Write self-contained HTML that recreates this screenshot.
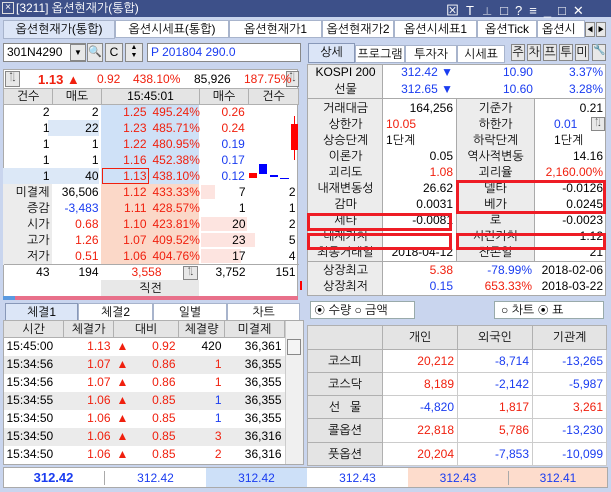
<!DOCTYPE html>
<html><head><meta charset="utf-8"><style>
*{margin:0;padding:0;box-sizing:border-box}
body{width:611px;height:492px;background:#c9d5ee;font-family:"Liberation Sans","NanumGothic","Noto Sans CJK KR",sans-serif;font-size:12px;color:#000;position:relative;overflow:hidden}
.a{position:absolute}
.r{color:#f0200e}.b{color:#1a3cf0}
table{border-collapse:collapse;position:absolute;table-layout:fixed}
td{height:16px;padding:0 3px;white-space:nowrap;overflow:hidden;line-height:15px}
.tR{text-align:right}.tC{text-align:center}
.hd{background:#e4e4e4;text-align:center;border:1px solid #b0b0b0}
.tab{position:absolute;top:20px;height:18px;background:#fff;border:1px solid #a8b4cc;text-align:center;line-height:17px;font-size:12px}
.btn{position:absolute;background:#e8e8e8;border:1px solid #888;text-align:center}
.rb{position:absolute;border:3px solid #ee1c25}
.pl{padding-left:22px}
</style></head><body>
<div class="a" style="left:0;top:0;width:611px;height:17px;background:#3d5089"></div>
<div class="a" style="left:2px;top:2px;width:12px;height:12px;border:1px solid #ddd;color:#fff;font-size:10px;line-height:10px;text-align:center">×</div>
<div class="a" style="left:16px;top:1px;color:#fff;font-size:12px">[3211] 옵션현재가(통합)</div>
<div class="a" style="left:446px;top:0;color:#fff;font-size:13px;letter-spacing:7px">⊠T⊥□?≡_□✕</div>
<div class="tab" style="left:3px;width:112px;background:#dde6f7;top:20px;height:19px">옵션현재가(통합)</div>
<div class="tab" style="left:115px;width:114px">옵션시세표(통합)</div>
<div class="tab" style="left:229px;width:93px">옵션현재가1</div>
<div class="tab" style="left:322px;width:72px">옵션현재가2</div>
<div class="tab" style="left:394px;width:83px">옵션시세표1</div>
<div class="tab" style="left:477px;width:60px">옵션Tick</div>
<div class="tab" style="left:537px;width:48px;text-align:left;padding-left:4px">옵션시</div>
<div class="btn" style="left:585px;top:22px;width:10px;height:15px;font-size:8px;line-height:13px">◀</div>
<div class="btn" style="left:596px;top:22px;width:10px;height:15px;font-size:8px;line-height:13px">▶</div>
<div class="a" style="left:3px;top:43px;width:83px;height:19px;background:#fff;border:1px solid #888;padding-left:3px;line-height:17px">301N4290</div>
<div class="btn" style="left:70px;top:44px;width:16px;height:17px;font-size:8px;line-height:15px">▼</div>
<div class="btn" style="left:87px;top:43px;width:16px;height:19px;font-size:11px;line-height:17px">🔍</div>
<div class="btn" style="left:105px;top:43px;width:18px;height:19px;line-height:17px">C</div>
<div class="btn" style="left:125px;top:43px;width:18px;height:19px;font-size:7px;line-height:8px">▲<br>▼</div>
<div class="a b" style="left:147px;top:43px;width:154px;height:19px;background:#fff;border:1px solid #888;padding-left:3px;line-height:17px">P 201804 290.0</div>
<div class="a" style="left:3px;top:69px;width:295px;height:20px;background:#fff;border:1px solid #aaa"></div>
<div class="btn" style="left:5px;top:71px;width:15px;height:16px;font-size:9px">⇅</div>
<div class="btn" style="left:286px;top:71px;width:13px;height:16px;font-size:9px">⇅</div>
<div class="a r" style="left:38px;top:72px;font-weight:bold;font-size:13px">1.13 ▲</div>
<div class="a r" style="left:97px;top:72px">0.92</div>
<div class="a r" style="left:133px;top:72px">438.10%</div>
<div class="a" style="left:194px;top:72px">85,926</div>
<div class="a r" style="left:244px;top:72px">187.75%</div>
<div class="a" style="left:3px;top:88px;width:295px;height:212px;background:#fff;border:1px solid #aaa"></div>
<div class="a" style="left:101px;top:103px;width:98px;height:81px;background:#cfe1f7"></div>
<div class="a" style="left:101px;top:184px;width:98px;height:81px;background:#fbd8c8"></div>
<div class="a" style="left:3px;top:184px;width:49px;height:81px;background:#ececec"></div>
<div class="a" style="left:48px;top:120px;width:51px;height:16px;background:#dce8f7"></div>
<div class="a" style="left:3px;top:168px;width:96px;height:16px;background:#dce8f7"></div>
<div class="a" style="left:201px;top:185px;width:14px;height:14px;background:#fde4e0"></div>
<div class="a" style="left:201px;top:217px;width:46px;height:14px;background:#fde4e0"></div>
<div class="a" style="left:201px;top:233px;width:54px;height:14px;background:#fde4e0"></div>
<div class="a" style="left:201px;top:249px;width:40px;height:14px;background:#fde4e0"></div>
<div class="a" style="left:102px;top:168px;width:47px;height:16px;border:1px solid #f0200e"></div>
<div class="a" style="left:101px;top:280px;width:98px;height:16px;background:#e8e8e8"></div>
<table style="left:3px;top:88px;width:295px">
<colgroup><col width="49"><col width="49"><col width="48"><col width="50"><col width="49"><col width="50"></colgroup>
<tr><td class="hd">건수</td><td class="hd">매도</td><td class="hd" colspan="2">15:45:01</td><td class="hd">매수</td><td class="hd">건수</td></tr>
<tr><td class="tR">2</td><td class="tR">2</td><td class="tR r">1.25</td><td class="tR r">495.24%</td><td class="r pl">0.26</td><td></td></tr>
<tr><td class="tR">1</td><td class="tR">22</td><td class="tR r">1.23</td><td class="tR r">485.71%</td><td class="r pl">0.24</td><td></td></tr>
<tr><td class="tR">1</td><td class="tR">1</td><td class="tR r">1.22</td><td class="tR r">480.95%</td><td class="b pl">0.19</td><td></td></tr>
<tr><td class="tR">1</td><td class="tR">1</td><td class="tR r">1.16</td><td class="tR r">452.38%</td><td class="b pl">0.17</td><td></td></tr>
<tr><td class="tR">1</td><td class="tR">40</td><td class="tR r">1.13</td><td class="tR r">438.10%</td><td class="b pl">0.12</td><td></td></tr>
<tr><td class="tR">미결제</td><td class="tR">36,506</td><td class="tR r">1.12</td><td class="tR r">433.33%</td><td class="tR">7</td><td class="tR">2</td></tr>
<tr><td class="tR">증감</td><td class="tR b">-3,483</td><td class="tR r">1.11</td><td class="tR r">428.57%</td><td class="tR">1</td><td class="tR">1</td></tr>
<tr><td class="tR">시가</td><td class="tR r">0.68</td><td class="tR r">1.10</td><td class="tR r">423.81%</td><td class="tR">20</td><td class="tR">2</td></tr>
<tr><td class="tR">고가</td><td class="tR r">1.26</td><td class="tR r">1.07</td><td class="tR r">409.52%</td><td class="tR">23</td><td class="tR">5</td></tr>
<tr><td class="tR">저가</td><td class="tR r">0.51</td><td class="tR r">1.06</td><td class="tR r">404.76%</td><td class="tR">17</td><td class="tR">4</td></tr>
<tr style="border-top:1px solid #aaa"><td class="tR">43</td><td class="tR">194</td><td class="tR r" colspan="2" style="padding-right:38px">3,558</td><td class="tR">3,752</td><td class="tR">151</td></tr>
<tr><td></td><td></td><td class="tC" colspan="2">직전</td><td></td><td></td></tr>
</table>
<div class="btn" style="left:183px;top:266px;width:15px;height:14px;font-size:8px">⇅</div>
<div class="a" style="left:3px;top:296px;width:295px;height:4px;background:#e8708a"></div>
<div class="a" style="left:3px;top:296px;width:12px;height:4px;background:#5a9ae0"></div>
<div class="a" style="left:294px;top:116px;width:1px;height:44px;background:#f00"></div>
<div class="a" style="left:291px;top:124px;width:7px;height:26px;background:#f00"></div>
<div class="a" style="left:249px;top:173px;width:8px;height:5px;background:#f00"></div>
<div class="a" style="left:259px;top:164px;width:8px;height:10px;background:#00f"></div>
<div class="a" style="left:270px;top:175px;width:8px;height:2px;background:#00f"></div>
<div class="a" style="left:280px;top:178px;width:9px;height:1px;background:#00f"></div>
<div class="a" style="left:300px;top:281px;width:2px;height:9px;background:#f00"></div>
<div class="tab" style="left:5px;top:303px;width:73px;background:#dce6f7;border-color:#8898b8">체결1</div>
<div class="tab" style="left:78px;top:303px;width:75px">체결2</div>
<div class="tab" style="left:153px;top:303px;width:74px">일별</div>
<div class="tab" style="left:227px;top:303px;width:73px">차트</div>
<div class="a" style="left:3px;top:320px;width:301px;height:145px;background:#fff;border:1px solid #aaa"></div>
<table style="left:3px;top:320px;width:281px">
<colgroup><col width="60"><col width="50"><col width="65"><col width="46"><col width="60"></colgroup>
<tr><td class="hd" style="height:17px">시간</td><td class="hd">체결가</td><td class="hd">대비</td><td class="hd">체결량</td><td class="hd">미결제</td></tr>
<tr style="height:18px"><td>15:45:00</td><td class="tR r">1.13</td><td class="r">▲<span style="float:right">0.92</span></td><td class="tR">420</td><td class="tR">36,361</td></tr>
<tr style="height:18px;background:#ebebeb"><td>15:34:56</td><td class="tR r">1.07</td><td class="r">▲<span style="float:right">0.86</span></td><td class="tR r">1</td><td class="tR">36,355</td></tr>
<tr style="height:18px"><td>15:34:56</td><td class="tR r">1.07</td><td class="r">▲<span style="float:right">0.86</span></td><td class="tR r">1</td><td class="tR">36,355</td></tr>
<tr style="height:18px;background:#ebebeb"><td>15:34:55</td><td class="tR r">1.06</td><td class="r">▲<span style="float:right">0.85</span></td><td class="tR b">1</td><td class="tR">36,355</td></tr>
<tr style="height:18px"><td>15:34:50</td><td class="tR r">1.06</td><td class="r">▲<span style="float:right">0.85</span></td><td class="tR b">1</td><td class="tR">36,355</td></tr>
<tr style="height:18px;background:#ebebeb"><td>15:34:50</td><td class="tR r">1.06</td><td class="r">▲<span style="float:right">0.85</span></td><td class="tR r">3</td><td class="tR">36,316</td></tr>
<tr style="height:18px"><td>15:34:50</td><td class="tR r">1.06</td><td class="r">▲<span style="float:right">0.85</span></td><td class="tR r">2</td><td class="tR">36,316</td></tr>
</table>
<div class="a" style="left:285px;top:321px;width:18px;height:143px;background:#f0f0f0;border-left:1px solid #ccc"></div>
<div class="btn" style="left:287px;top:339px;width:14px;height:16px;background:#f4f4f4"></div>
<div class="a" style="left:3px;top:467px;width:605px;height:21px;background:#fff;border:1px solid #aaa"></div>
<div class="a" style="left:206px;top:468px;width:101px;height:19px;background:#cde0f8"></div>
<div class="a" style="left:408px;top:468px;width:199px;height:19px;background:#fddccc"></div>
<div class="a b" style="left:3px;top:470px;width:101px;text-align:center;font-weight:bold;font-size:13px">312.42</div>
<div class="a b" style="left:104px;top:471px;width:102px;text-align:center;border-left:1px solid #aaa">312.42</div>
<div class="a b" style="left:206px;top:471px;width:101px;text-align:center">312.42</div>
<div class="a b" style="left:307px;top:471px;width:101px;text-align:center">312.43</div>
<div class="a b" style="left:408px;top:471px;width:100px;text-align:center">312.43</div>
<div class="a b" style="left:508px;top:471px;width:99px;text-align:center;border-left:1px solid #aaa">312.41</div>
<div class="tab" style="left:308px;top:43px;width:47px;height:20px;background:#dbe5f7;border-color:#8898b8">상세</div>
<div class="tab" style="left:355px;top:45px;width:50px">프로그램</div>
<div class="tab" style="left:405px;top:45px;width:52px">투자자</div>
<div class="tab" style="left:457px;top:45px;width:48px">시세표</div>
<div class="btn" style="left:511px;top:44px;width:14px;height:17px">주</div>
<div class="btn" style="left:527px;top:44px;width:14px;height:17px">차</div>
<div class="btn" style="left:543px;top:44px;width:14px;height:17px">프</div>
<div class="btn" style="left:559px;top:44px;width:14px;height:17px">투</div>
<div class="btn" style="left:575px;top:44px;width:14px;height:17px">미</div>
<div class="btn" style="left:592px;top:44px;width:14px;height:17px;font-size:10px">🔧</div>
<div class="a" style="left:307px;top:64px;width:299px;height:232px;background:#fff;border:1px solid #aaa"></div>
<div class="a" style="left:308px;top:65px;width:75px;height:230px;background:#ececec;border-right:1px solid #aaa"></div>
<div class="a" style="left:456px;top:99px;width:79px;height:162px;background:#ececec;border-left:1px solid #aaa;border-right:1px solid #aaa"></div>
<div class="a" style="left:307px;top:98px;width:299px;height:1px;background:#aaa"></div>
<div class="a" style="left:307px;top:261px;width:299px;height:1px;background:#aaa"></div>
<table style="left:308px;top:64px;width:298px">
<colgroup><col width="75"><col width="73"><col width="79"><col width="71"></colgroup>
<tr style="height:17px"><td class="tC">KOSPI 200</td><td class="tR b">312.42 ▼</td><td class="tR b" colspan="2"><span style="margin-right:36px">10.90</span>3.37%</td></tr>
<tr style="height:17px"><td class="tC">선물</td><td class="tR b">312.65 ▼</td><td class="tR b" colspan="2"><span style="margin-right:36px">10.60</span>3.28%</td></tr>
<tr style="height:1px"><td style="height:2px"></td></tr>
<tr><td class="tC">거래대금</td><td class="tR">164,256</td><td class="tC">기준가</td><td class="tR">0.21</td></tr>
<tr><td class="tC">상한가</td><td class="r">10.05</td><td class="tC">하한가</td><td class="b" style="padding-left:19px">0.01</td></tr>
<tr><td class="tC">상승단계</td><td>1단계</td><td class="tC">하락단계</td><td style="padding-left:19px">1단계</td></tr>
<tr><td class="tC">이론가</td><td class="tR">0.05</td><td class="tC">역사적변동</td><td class="tR">14.16</td></tr>
<tr><td class="tC">괴리도</td><td class="tR r">1.08</td><td class="tC">괴리율</td><td class="tR r">2,160.00%</td></tr>
<tr><td class="tC">내재변동성</td><td class="tR">26.62</td><td class="tC">델타</td><td class="tR">-0.0126</td></tr>
<tr><td class="tC">감마</td><td class="tR">0.0031</td><td class="tC">베가</td><td class="tR">0.0245</td></tr>
<tr><td class="tC">세타</td><td class="tR">-0.0081</td><td class="tC">로</td><td class="tR">-0.0023</td></tr>
<tr><td class="tC">내재가치</td><td></td><td class="tC">시간가치</td><td class="tR">1.12</td></tr>
<tr><td class="tC">최종거래일</td><td class="tR">2018-04-12</td><td class="tC">잔존일</td><td class="tR">21</td></tr>
<tr><td style="height:2px"></td></tr>
<tr><td class="tC">상장최고</td><td class="tR r">5.38</td><td class="tR b">-78.99%</td><td class="tR">2018-02-06</td></tr>
<tr><td class="tC">상장최저</td><td class="tR b">0.15</td><td class="tR r">653.33%</td><td class="tR">2018-03-22</td></tr>
</table>
<div class="btn" style="left:591px;top:117px;width:14px;height:14px;font-size:8px">⇅</div>
<div class="rb" style="left:456px;top:180px;width:150px;height:34px"></div>
<div class="rb" style="left:307px;top:213px;width:145px;height:18px"></div>
<div class="rb" style="left:307px;top:233px;width:145px;height:17px"></div>
<div class="rb" style="left:456px;top:233px;width:150px;height:17px"></div>
<div class="a" style="left:310px;top:301px;width:105px;height:18px;background:#fff;border:1px solid #9aa"></div>
<div class="a" style="left:314px;top:303px">◉ 수량 ○ 금액</div>
<div class="a" style="left:494px;top:301px;width:110px;height:18px;background:#fff;border:1px solid #9aa"></div>
<div class="a" style="left:501px;top:303px">○ 차트 ◉ 표</div>
<table style="left:307px;top:325px;width:299px;background:#fff;border:1px solid #aaa">
<colgroup><col width="75"><col width="75"><col width="75"><col width="74"></colgroup>
<tr style="height:24px"><td class="hd"></td><td class="hd">개인</td><td class="hd">외국인</td><td class="hd">기관계</td></tr>
<tr style="height:23px"><td class="hd">코스피</td><td class="tR r" style="border:1px solid #ccc">20,212</td><td class="tR b" style="border:1px solid #ccc">-8,714</td><td class="tR b" style="border:1px solid #ccc">-13,265</td></tr>
<tr style="height:23px"><td class="hd">코스닥</td><td class="tR r" style="border:1px solid #ccc">8,189</td><td class="tR b" style="border:1px solid #ccc">-2,142</td><td class="tR b" style="border:1px solid #ccc">-5,987</td></tr>
<tr style="height:23px"><td class="hd">선 &nbsp; 물</td><td class="tR b" style="border:1px solid #ccc">-4,820</td><td class="tR r" style="border:1px solid #ccc">1,817</td><td class="tR r" style="border:1px solid #ccc">3,261</td></tr>
<tr style="height:24px"><td class="hd">콜옵션</td><td class="tR r" style="border:1px solid #ccc">22,818</td><td class="tR r" style="border:1px solid #ccc">5,786</td><td class="tR b" style="border:1px solid #ccc">-13,230</td></tr>
<tr style="height:23px"><td class="hd">풋옵션</td><td class="tR r" style="border:1px solid #ccc">20,204</td><td class="tR b" style="border:1px solid #ccc">-7,853</td><td class="tR b" style="border:1px solid #ccc">-10,099</td></tr>
</table>
</body></html>
